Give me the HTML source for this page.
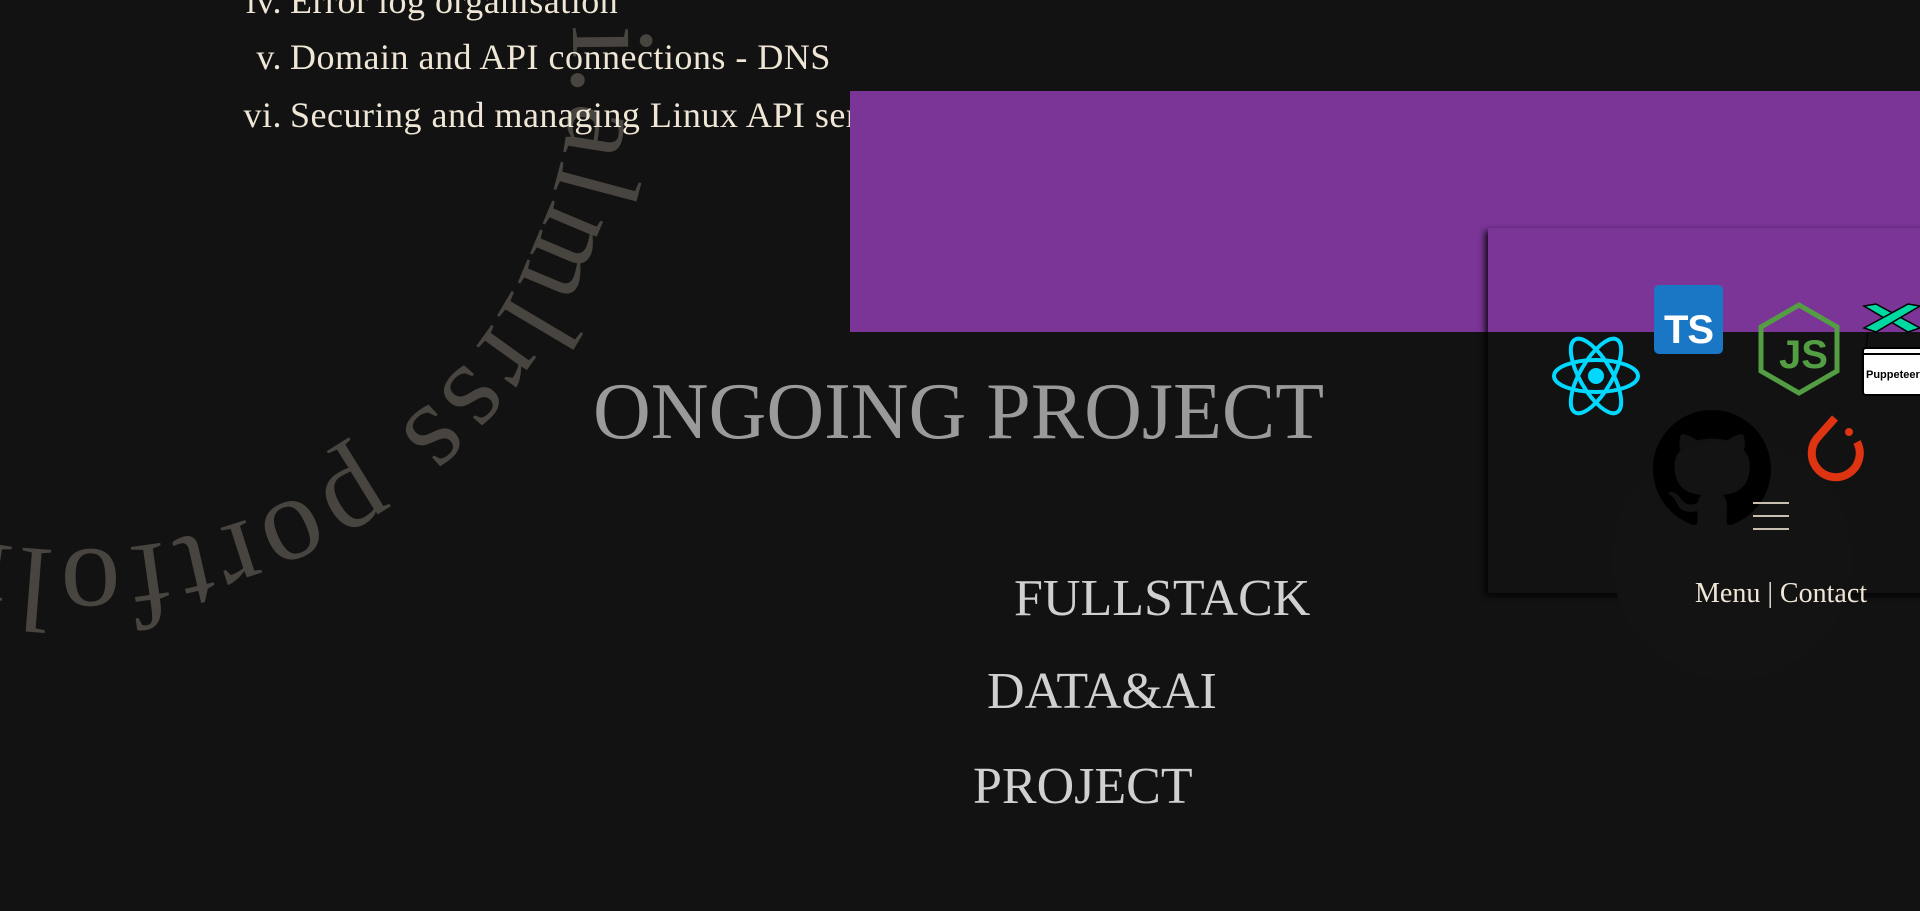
<!DOCTYPE html>
<html><head><meta charset="utf-8"><style>
html,body{margin:0;padding:0;background:#121212;width:1920px;height:911px;overflow:hidden;font-family:"Liberation Serif",serif;}
.abs{position:absolute;}
.li{position:absolute;color:#efe6d6;font-size:36px;white-space:nowrap;line-height:1;letter-spacing:0.5px}
.li span{display:inline-block;text-align:right;width:60px;margin-right:8px;}
.h{position:absolute;white-space:nowrap;line-height:1;}
</style></head><body>
<svg class="abs" style="left:0;top:0" width="1920" height="911">
<defs><path id="c" d="M 543 -121 A 500 500 0 1 1 -397 221 A 500 500 0 1 1 543 -121"/></defs>
<text font-family="Liberation Serif, serif" font-size="120" fill="#48443f" letter-spacing="6"><textPath href="#c" startOffset="150">i.almlrss portfolio</textPath></text>
</svg>
<div class="li" style="left:222px;top:-17px"><span>iv.</span>Error log organisation</div>
<div class="li" style="left:222px;top:39px"><span>v.</span>Domain and API connections - DNS</div>
<div class="li" style="left:222px;top:97px"><span>vi.</span>Securing and managing Linux API servers</div>
<div class="abs" style="left:850px;top:91px;width:1070px;height:241px;background:#7b3596"></div>
<div class="abs" style="left:1488px;top:228px;width:460px;height:365px;box-shadow:-3px 3px 6px rgba(0,0,0,.85)"></div>
<div class="h" style="left:593px;top:372px;font-size:80px;color:#9a9a9a">ONGOING PROJECT</div>
<div class="h" style="left:1014px;top:573px;font-size:52px;color:#d0d0d0">FULLSTACK</div>
<div class="h" style="left:987px;top:666px;font-size:52px;color:#d0d0d0">DATA&amp;AI</div>
<div class="h" style="left:973px;top:761px;font-size:52px;color:#d0d0d0">PROJECT</div>
<!-- react -->
<svg class="abs" style="left:1552px;top:334px" width="88" height="84" viewBox="-44 -42 88 84">
<g fill="none" stroke="#00d8ff" stroke-width="4"><ellipse rx="42" ry="16"/><ellipse rx="42" ry="16" transform="rotate(60)"/><ellipse rx="42" ry="16" transform="rotate(120)"/></g><circle r="8" fill="#00d8ff"/></svg>
<!-- TS -->
<div class="abs" style="left:1654px;top:285px;width:69px;height:69px;background:#1a77c5;border-radius:5px"></div>
<div class="abs" style="left:1664px;top:308px;font:bold 40px 'Liberation Sans',sans-serif;color:#fff;letter-spacing:-1px">TS</div>
<!-- node -->
<svg class="abs" style="left:1757px;top:302px" width="84" height="94" viewBox="0 0 84 94">
<polygon points="42,3 80,25 80,69 42,91 4,69 4,25" fill="none" stroke="#539e43" stroke-width="5"/>
<text x="22" y="66" font-family="Liberation Sans,sans-serif" font-weight="bold" font-size="40" fill="#539e43">JS</text></svg>
<!-- puppeteer -->
<svg class="abs" style="left:1862px;top:302px" width="58" height="94">
<path d="M2 4 L14 2 L58 26 L46 30 Z" fill="#00d8a2" stroke="#000" stroke-width="1.5"/><path d="M2 26 L46 2 L58 4 L14 30 Z" fill="#00d8a2" stroke="#000" stroke-width="1.5"/>
<line x1="6" y1="30" x2="4" y2="46" stroke="#000" stroke-width="1"/>
<rect x="1" y="46" width="70" height="47" rx="3" fill="#fff" stroke="#000" stroke-width="2"/>
<line x1="1" y1="52" x2="70" y2="52" stroke="#000" stroke-width="2"/>
<text x="4" y="76" font-family="Liberation Sans,sans-serif" font-weight="bold" font-size="11" fill="#000">Puppeteer</text></svg>
<!-- github -->
<div class="abs" style="left:1612px;top:440px;width:240px;height:240px;border-radius:50%;background:#131313"></div>
<svg class="abs" style="left:1653px;top:410px" width="118" height="118" viewBox="0 0 16 16">
<path fill="#000" d="M8 0C3.580 0 0 3.58 0 8c0 3.54 2.29 6.53 5.47 7.59.4.07.55-.17.55-.38 0-.19-.01-.82-.01-1.49-2.01.37-2.53-.49-2.69-.94-.09-.23-.48-.94-.82-1.13-.28-.15-.68-.52-.01-.53.63-.01 1.08.58 1.23.82.72 1.21 1.87.87 2.33.66.07-.52.28-.87.51-1.07-1.78-.2-3.64-.89-3.64-3.95 0-.87.31-1.59.82-2.15-.08-.2-.36-1.02.08-2.12 0 0 .67-.21 2.2.82.64-.18 1.32-.27 2-.27.68 0 1.36.09 2 .27 1.53-1.04 2.2-.82 2.2-.82.44 1.1.16 1.92.08 2.12.51.56.82 1.27.82 2.15 0 3.07-1.87 3.75-3.65 3.95.29.25.54.73.54 1.48 0 1.07-.01 1.93-.01 2.2 0 .21.15.46.55.38A8.013 8.013 0 0016 8c0-4.42-3.58-8-8-8z"/></svg>
<!-- pytorch -->
<svg class="abs" style="left:1805px;top:414px" width="68" height="80" viewBox="0 0 68 80">
<path d="M30 4 L14 22 A24 24 0 1 0 52 28" fill="none" stroke="#de3412" stroke-width="8" stroke-linejoin="round"/>
<circle cx="44" cy="18" r="4" fill="#de3412"/></svg>
<!-- hamburger -->
<div class="abs" style="left:1753px;top:502px;width:36px;height:2px;background:#c8bfb0"></div>
<div class="abs" style="left:1753px;top:515px;width:36px;height:2px;background:#c8bfb0"></div>
<div class="abs" style="left:1753px;top:528px;width:36px;height:2px;background:#c8bfb0"></div>
<div class="h" style="left:1695px;top:580px;font-size:28px;color:#efe6d6">Menu | Contact</div>
</body></html>
